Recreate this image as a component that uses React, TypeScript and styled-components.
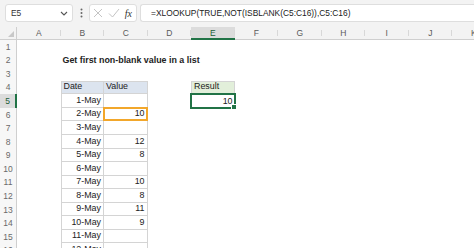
import React from "react";
import styled, { createGlobalStyle, css } from "styled-components";

const COLS = ["A", "B", "C", "D", "E", "F", "G", "H", "I", "J", "K"];
const ROWS = Array.from({ length: 16 }, (_, i) => i + 1);

const GREEN = "#217346";
const ORANGE = "#f2a72b";
const LINE = "#cfcfcf";

type Mark = "orange" | "select";

interface CellSpec {
  text?: string;
  right?: boolean;
  bold?: boolean;
  fill?: string;
  table?: boolean;
  mark?: Mark;
}

// sheet contents, keyed by address
const cells: Record<string, CellSpec> = {
  B2: { text: "Get first non-blank value in a list", bold: true },
  B4: { text: "Date", fill: "#dce4ef", table: true },
  C4: { text: "Value", fill: "#dce4ef", table: true },
  E4: { text: "Result", fill: "#e2efda", table: true },
  E5: { text: "10", right: true, mark: "select" },
};

const values = ["", "10", "", "12", "8", "", "10", "8", "11", "9", "", ""];
values.forEach((v, i) => {
  const row = i + 5;
  cells[`B${row}`] = { text: `${i + 1}-May`, right: true, table: true };
  cells[`C${row}`] = { text: v, right: true, table: true };
});
cells.C6.mark = "orange";

const GlobalStyle = createGlobalStyle`
  html, body { margin: 0; padding: 0; background: #fff; }
  body { font-family: "Liberation Sans", Arial, sans-serif; color: #222; overflow: hidden; }
`;

const Window = styled.div`
  width: 474px;
  height: 248px;
  display: flex;
  flex-direction: column;
  overflow: hidden;
`;

const FormulaBar = styled.div`
  height: 27px;
  flex: none;
  display: flex;
  align-items: center;
  gap: 0;
  padding: 0 0 1px 5px;
  background: #f3f3f3;
  box-sizing: border-box;
`;

const Box = styled.div`
  height: 18px;
  box-sizing: border-box;
  background: #fff;
  border: 1px solid #dedede;
  border-radius: 3px;
  display: flex;
  align-items: center;
`;

const NameBox = styled(Box)`
  width: 68px;
  padding: 0 4px 0 5px;
  justify-content: space-between;
  font-size: 8.4px;
  color: #333;
`;

const Grip = styled.div`
  width: 16px;
  display: flex;
  justify-content: center;
`;

const FuncBox = styled(Box)`
  width: 48px;
  padding: 0 3px;
  justify-content: space-between;
`;

const Fx = styled.span`
  font-family: "Liberation Serif", "Times New Roman", serif;
  font-style: italic;
  font-size: 10px;
  color: #333;
  padding-right: 1px;
`;

const FormulaInput = styled(Box)`
  flex: 1;
  margin-left: 3px;
  padding-left: 10px;
  border-right: none;
  border-radius: 3px 0 0 3px;
  font-size: 8.4px;
  color: #222;
  white-space: nowrap;
`;

const Sheet = styled.div`
  flex: 1;
  display: grid;
  grid-template-columns: 17px repeat(11, 43.5px);
  grid-template-rows: 13px repeat(16, 13.57px);
  overflow: hidden;
`;

const Corner = styled.div`
  background: #f3f3f3;
  border-right: 1px solid ${LINE};
  border-bottom: 1px solid ${LINE};
  box-sizing: border-box;
  position: relative;
  &::after {
    content: "";
    position: absolute;
    right: 2px;
    bottom: 2px;
    border-left: 6px solid transparent;
    border-bottom: 6px solid #c8c8c8;
  }
`;

const ColHeader = styled.div<{ $active?: boolean }>`
  position: relative;
  box-sizing: border-box;
  display: flex;
  align-items: center;
  justify-content: center;
  font-size: 8.5px;
  color: ${(p) => (p.$active ? "#1d5e3a" : "#5a5a5a")};
  background: ${(p) => (p.$active ? "#dcdcdc" : "#f3f3f3")};
  border-bottom: ${(p) => (p.$active ? `2px solid ${GREEN}` : `1px solid ${LINE}`)};
  &::after {
    content: "";
    position: absolute;
    right: 0;
    top: 3px;
    bottom: 3px;
    width: 1px;
    background: #d8d8d8;
  }
`;

const RowHeader = styled.div<{ $active?: boolean }>`
  box-sizing: border-box;
  display: flex;
  align-items: center;
  justify-content: center;
  font-size: 8.5px;
  color: ${(p) => (p.$active ? "#1d5e3a" : "#6a6a6a")};
  background: ${(p) => (p.$active ? "#dcdcdc" : "#f7f7f7")};
  border-right: ${(p) => (p.$active ? `2px solid ${GREEN}` : `1px solid ${LINE}`)};
`;

const Cell = styled.div<{
  $right?: boolean;
  $bold?: boolean;
  $fill?: string;
  $table?: boolean;
  $left?: boolean;
  $top?: boolean;
}>`
  position: relative;
  box-sizing: border-box;
  display: flex;
  align-items: flex-end;
  justify-content: ${(p) => (p.$right ? "flex-end" : "flex-start")};
  padding: 0 2px 1px;
  font-size: 8.9px;
  line-height: 11px;
  font-weight: ${(p) => (p.$bold ? 700 : 400)};
  white-space: nowrap;
  color: #222;
  background: ${(p) => p.$fill ?? "transparent"};
  ${(p) =>
    p.$table &&
    css`
      border-right: 1px solid #d4d4d4;
      border-bottom: 1px solid #d4d4d4;
      ${p.$left && "border-left: 1px solid #d4d4d4;"}
      ${p.$top && "border-top: 1px solid #d4d4d4;"}
    `}
`;

const Outline = styled.div<{ $kind: Mark }>`
  position: absolute;
  inset: -1px -1px -1px -1px;
  border: 2px solid ${(p) => (p.$kind === "orange" ? ORANGE : GREEN)};
  pointer-events: none;
  z-index: 2;
`;

const Handle = styled.div`
  position: absolute;
  right: -3px;
  bottom: -3px;
  width: 4px;
  height: 4px;
  background: ${GREEN};
  border: 1px solid #fff;
`;

const Chevron = () => (
  <svg width="8" height="5" viewBox="0 0 8 5">
    <path d="M1 1l3 3 3-3" fill="none" stroke="#555" strokeWidth="1.1" />
  </svg>
);

const Dots = () => (
  <svg width="3" height="10" viewBox="0 0 3 10">
    <circle cx="1.5" cy="1.5" r="1" fill="#666" />
    <circle cx="1.5" cy="5" r="1" fill="#666" />
    <circle cx="1.5" cy="8.5" r="1" fill="#666" />
  </svg>
);

const Cross = () => (
  <svg width="10" height="10" viewBox="0 0 10 10">
    <path d="M1 1l8 8M9 1l-8 8" stroke="#c4c4c4" strokeWidth="1" />
  </svg>
);

const Check = () => (
  <svg width="12" height="10" viewBox="0 0 12 10">
    <path d="M1 5.5l3.5 3.5L11 1" fill="none" stroke="#c4c4c4" strokeWidth="1" />
  </svg>
);

const isTableLeft = (col: string, row: number) =>
  (col === "B" && row >= 4) || (col === "E" && row === 4);

export default function App() {
  return (
    <Window>
      <GlobalStyle />
      <FormulaBar>
        <NameBox>
          <span>E5</span>
          <Chevron />
        </NameBox>
        <Grip>
          <Dots />
        </Grip>
        <FuncBox>
          <Cross />
          <Check />
          <Fx>fx</Fx>
        </FuncBox>
        <FormulaInput>=XLOOKUP(TRUE,NOT(ISBLANK(C5:C16)),C5:C16)</FormulaInput>
      </FormulaBar>
      <Sheet>
        <Corner />
        {COLS.map((c) => (
          <ColHeader key={c} $active={c === "E"}>
            {c}
          </ColHeader>
        ))}
        {ROWS.map((r) => (
          <React.Fragment key={r}>
            <RowHeader $active={r === 5}>{r}</RowHeader>
            {COLS.map((c) => {
              const spec = cells[`${c}${r}`] ?? {};
              return (
                <Cell
                  key={c}
                  $right={spec.right}
                  $bold={spec.bold}
                  $fill={spec.fill}
                  $table={spec.table}
                  $left={isTableLeft(c, r)}
                  $top={r === 4}
                >
                  {spec.text}
                  {spec.mark && (
                    <Outline $kind={spec.mark}>
                      {spec.mark === "select" && <Handle />}
                    </Outline>
                  )}
                </Cell>
              );
            })}
          </React.Fragment>
        ))}
      </Sheet>
    </Window>
  );
}
